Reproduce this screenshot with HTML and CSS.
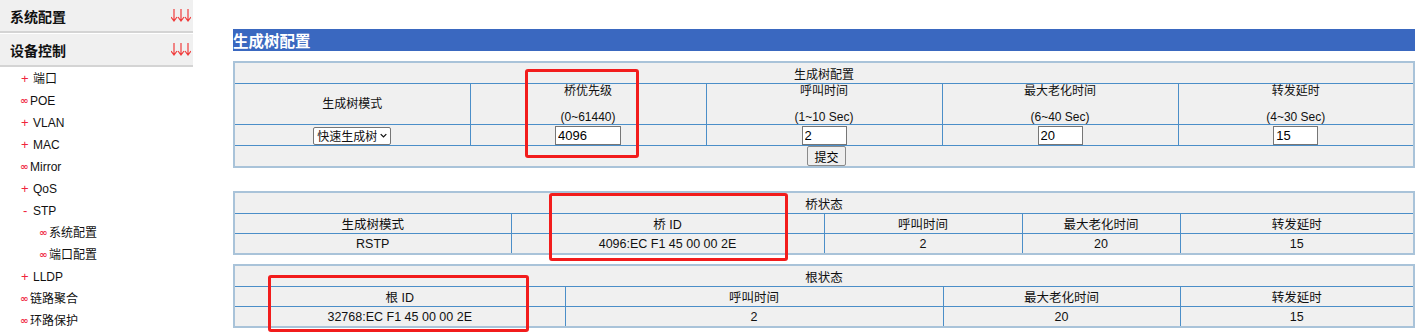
FILE: index.html
```html
<!DOCTYPE html>
<html lang="zh-CN">

<head>
    <meta charset="UTF-8">
    <title>生成树配置</title>
    <link rel="stylesheet" href="styles.css">
</head>

<body>
    <div class="page">
        <div class="sidebar">
            <div class="group">系统配置
                <svg class="arrows" width="20" height="13" viewBox="0 0 20 13">
                    <path d="M3 0V12M0 8L3 12L6 8M10 0V12M7 8L10 12L13 8M17 0V12M14 8L17 12L20 8" />
                </svg>
            </div>
            <div class="group">设备控制
                <svg class="arrows" width="20" height="13" viewBox="0 0 20 13">
                    <path d="M3 0V12M0 8L3 12L6 8M10 0V12M7 8L10 12L13 8M17 0V12M14 8L17 12L20 8" />
                </svg>
            </div>
            <ul class="menu">
                <li class="plus"><span class="mark">+</span>端口</li>
                <li class="leaf"><span class="mark">∞</span>POE</li>
                <li class="plus"><span class="mark">+</span>VLAN</li>
                <li class="plus"><span class="mark">+</span>MAC</li>
                <li class="leaf"><span class="mark">∞</span>Mirror</li>
                <li class="plus"><span class="mark">+</span>QoS</li>
                <li class="plus"><span class="mark minus">-</span>STP</li>
                <li class="leaf sub"><span class="mark">∞</span>系统配置</li>
                <li class="leaf sub"><span class="mark">∞</span>端口配置</li>
                <li class="plus"><span class="mark">+</span>LLDP</li>
                <li class="leaf"><span class="mark">∞</span>链路聚合</li>
                <li class="leaf"><span class="mark">∞</span>环路保护</li>
            </ul>
        </div>

        <div class="main">
            <h2 class="title">生成树配置</h2>

            <table class="grid cfg">
                <tr>
                    <td colspan="5" class="caption">生成树配置</td>
                </tr>
                <tr class="tall">
                    <td>生成树模式</td>
                    <td>桥优先级<br><br>(0~61440)</td>
                    <td>呼叫时间<br><br>(1~10 Sec)</td>
                    <td>最大老化时间<br><br>(6~40 Sec)</td>
                    <td>转发延时<br><br>(4~30 Sec)</td>
                </tr>
                <tr>
                    <td>
                        <span class="mode">
                            <select>
                                <option>快速生成树</option>
                            </select>
                            <svg width="10" height="7" viewBox="0 0 10 7">
                                <path d="M1 1.5L5 5.5L9 1.5" />
                            </svg>
                        </span>
                    </td>
                    <td><input type="text" class="num wide" value="4096"></td>
                    <td><input type="text" class="num" value="2"></td>
                    <td><input type="text" class="num" value="20"></td>
                    <td><input type="text" class="num" value="15"></td>
                </tr>
                <tr>
                    <td colspan="5" class="submit-cell"><button type="button" class="btn">提交</button></td>
                </tr>
            </table>

            <table class="grid bridge">
                <colgroup>
                    <col style="width: 277px">
                    <col style="width: 313px">
                    <col style="width: 198px">
                    <col style="width: 158px">
                    <col>
                </colgroup>
                <tr>
                    <td colspan="5" class="caption">桥状态</td>
                </tr>
                <tr>
                    <td>生成树模式</td>
                    <td>桥 ID</td>
                    <td>呼叫时间</td>
                    <td>最大老化时间</td>
                    <td>转发延时</td>
                </tr>
                <tr>
                    <td>RSTP</td>
                    <td>4096:EC F1 45 00 00 2E</td>
                    <td>2</td>
                    <td>20</td>
                    <td>15</td>
                </tr>
            </table>

            <table class="grid root">
                <colgroup>
                    <col style="width: 331px">
                    <col style="width: 378px">
                    <col style="width: 237px">
                    <col>
                </colgroup>
                <tr>
                    <td colspan="4" class="caption">根状态</td>
                </tr>
                <tr>
                    <td>根 ID</td>
                    <td>呼叫时间</td>
                    <td>最大老化时间</td>
                    <td>转发延时</td>
                </tr>
                <tr>
                    <td>32768:EC F1 45 00 00 2E</td>
                    <td>2</td>
                    <td>20</td>
                    <td>15</td>
                </tr>
            </table>
        </div>

        <!-- annotation boxes drawn over the screenshot -->
        <div class="mark-box box-priority"></div>
        <div class="mark-box box-bridge"></div>
        <div class="mark-box box-root"></div>
    </div>
</body>

</html>
```

FILE: styles.css
```css
body {
    margin: 0;
    font-family: "Liberation Sans", "Noto Sans CJK SC", sans-serif;
    font-size: 12px;
    color: #111;
    background-color: #fff;
}

.page {
    position: relative;
    display: flex;
    align-items: flex-start;
}

/* sidebar */

.sidebar {
    width: 193px;
    flex-shrink: 0;
}

.group {
    display: flex;
    align-items: center;
    justify-content: space-between;
    height: 31px;
    padding: 0 2px 0 10px;
    background-color: #f0f0f0;
    border-bottom: 2px solid #d4d4d4;
    font-family: "Noto Sans CJK SC", sans-serif;
    font-size: 14px;
    font-weight: bold;
    color: #111;
}

.group + .group {
    margin-top: 1px;
}

.arrows path {
    fill: none;
    stroke: #f03c3c;
    stroke-width: 1.2;
}

.menu {
    list-style: none;
    margin: 1px 0 0;
    padding: 0;
}

.menu li {
    height: 22px;
    line-height: 22px;
    font-size: 12px;
    white-space: nowrap;
}

.plus {
    padding-left: 21px;
}

.leaf {
    padding-left: 20px;
}

.leaf.sub {
    padding-left: 39px;
}

.mark {
    display: inline-block;
    color: #f0243c;
}

.plus .mark {
    width: 12px;
    font-size: 13px;
}

.mark.minus {
    padding-left: 2px;
    width: 10px;
}

.leaf .mark {
    width: 10px;
    font-family: "DejaVu Sans", sans-serif;
    font-size: 10px;
    font-weight: bold;
    vertical-align: 1px;
    color: #f0304a;
}

/* main */

.main {
    flex: 1;
    margin: 29px 4px 0 40px;
}

.title {
    margin: 0 0 10px;
    height: 22px;
    line-height: 22px;
    background-color: #3a68c0;
    color: #fff;
    font-family: "Noto Sans CJK SC", sans-serif;
    font-size: 15.5px;
    font-weight: bold;
}

.grid {
    width: 100%;
    table-layout: fixed;
    border-collapse: collapse;
    border: 2px solid #a9c3d9;
    background-color: #f0f0f0;
    font-family: "Liberation Sans", "Noto Sans CJK SC", sans-serif;
    font-size: 12px;
}

.grid td {
    height: 19px;
    padding: 0;
    border: 1px solid #4b8ec8;
    text-align: center;
    vertical-align: middle;
}

.grid .caption {
    height: 20px;
}

.cfg .tall td {
    height: 39px;
    line-height: 13px;
    padding-top: 1px;
}

.bridge,
.root {
    font-size: 12.5px;
}

.bridge {
    margin-top: 23px;
}

.root {
    margin-top: 9px;
}

.root td:first-child + td {
    border-left-color: #9cbcd6;
}

.submit-cell {
    text-align: left !important;
    padding-left: 572px !important;
}

.mode {
    display: inline-flex;
    align-items: center;
    gap: 3px;
    box-sizing: border-box;
    width: 78px;
    height: 18px;
    padding: 0 3px 0 3px;
    margin-top: 1px;
    vertical-align: middle;
    border: 1px solid #767676;
    border-radius: 2px;
    background-color: #fff;
}

.mode select {
    appearance: none;
    border: none;
    padding: 0;
    margin: 0;
    width: 60px;
    background: transparent;
    font-family: "Noto Sans CJK SC", sans-serif;
    font-size: 12px;
    color: #111;
}

.mode path {
    fill: none;
    stroke: #111;
    stroke-width: 1.8;
}

.num {
    box-sizing: border-box;
    width: 45px;
    height: 19px;
    padding: 0 2px;
    margin-top: 1px;
    font-family: "Liberation Sans", sans-serif;
    font-size: 13px;
    border: 1px solid #767676;
    background-color: #fff;
}

.num.wide {
    width: 66px;
}

.btn {
    height: 20px;
    width: 39px;
    padding: 0;
    font-family: "Noto Sans CJK SC", sans-serif;
    font-size: 12px;
    border: 1px solid #8a8a8a;
    border-radius: 2px;
    background-color: #efefef;
    vertical-align: middle;
}

/* red annotation boxes */

.mark-box {
    position: absolute;
    box-sizing: border-box;
    border: 3px solid #f21c1c;
    border-radius: 3px;
}

.box-priority {
    left: 525px;
    top: 69px;
    width: 114px;
    height: 89px;
}

.box-bridge {
    left: 549px;
    top: 193px;
    width: 239px;
    height: 68px;
}

.box-root {
    left: 268px;
    top: 275px;
    width: 261px;
    height: 57px;
}
```
